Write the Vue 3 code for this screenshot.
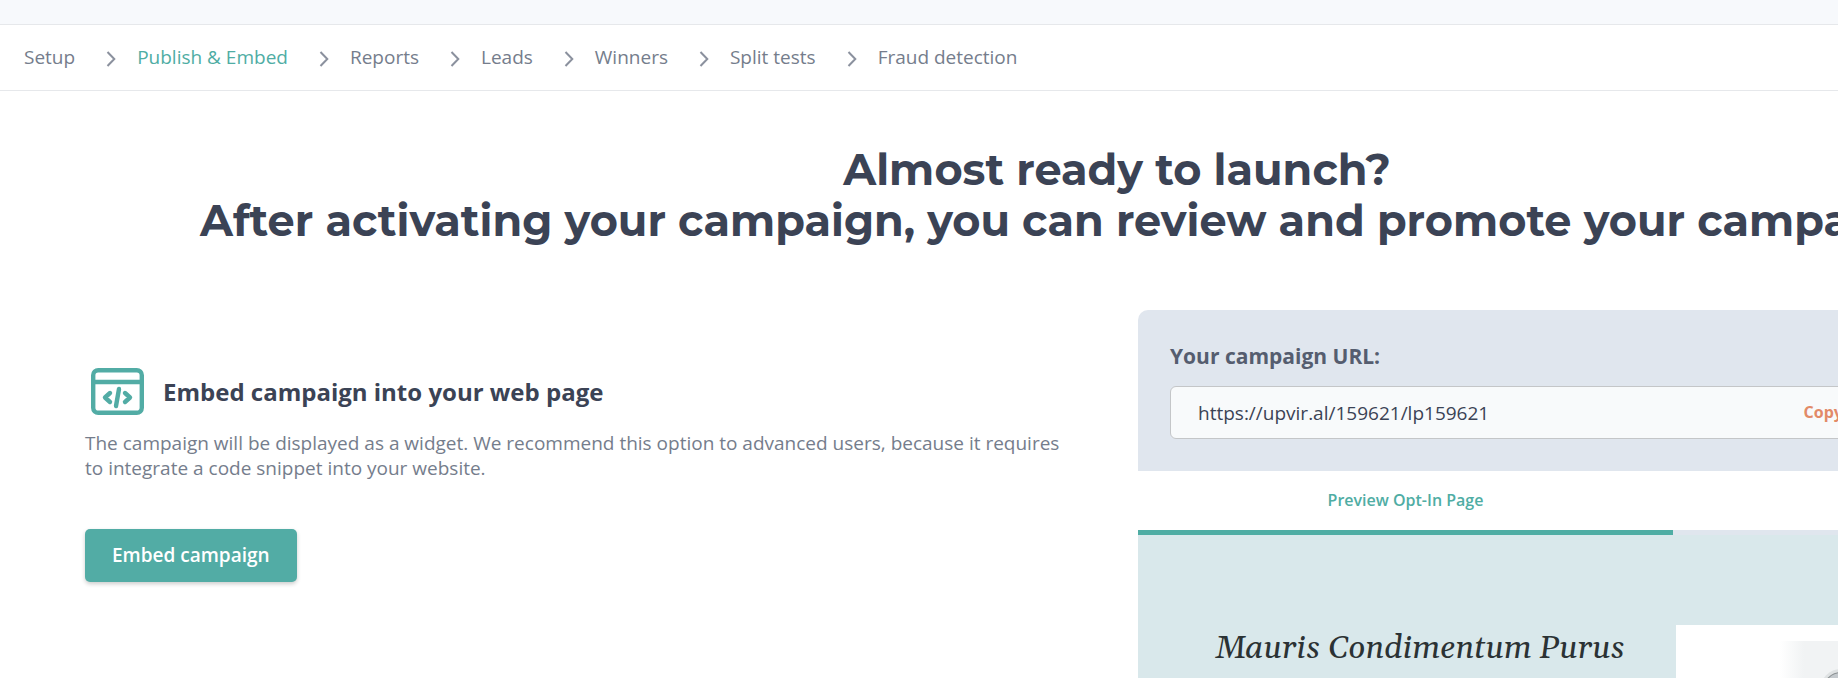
<script setup>
import { ref } from "vue";

const steps = ["Setup", "Publish & Embed", "Reports", "Leads", "Winners", "Split tests", "Fraud detection"];
const activeStep = ref("Publish & Embed");

const campaignUrl = ref("https://upvir.al/159621/lp159621");

function copyUrl() {
  navigator.clipboard.writeText(campaignUrl.value);
}
</script>

<template>
  <div class="page">
    <div class="top-strip"></div>
    <nav class="steps">
      <template v-for="(step, index) in steps" :key="step">
        <svg v-if="index > 0" class="chevron" width="10" height="16" viewBox="0 0 10 16">
          <path d="M1.5 1 L8.3 8 L1.5 15" />
        </svg>
        <a href="#" :class="['step', { active: step === activeStep }]" @click.prevent="activeStep = step">{{ step }}</a>
      </template>
    </nav>

    <main class="content">
      <h1 class="title">
        <span class="line">Almost ready to launch?</span>
        <span class="line long">After activating your campaign, you can review and promote your campaign</span>
      </h1>

      <div class="columns">
        <section class="embed">
          <div class="embed-head">
            <svg class="code-icon" width="53" height="47" viewBox="0 0 53 47">
              <rect x="2.2" y="2.2" width="48.6" height="42.6" rx="5" />
              <path d="M2 14 H51" />
              <path class="code" d="M19 25 L14 29.5 L19 34 M28 21 L25 38 M34 25 L39 29.5 L34 34" />
            </svg>
            <h2>Embed campaign into your web page</h2>
          </div>
          <p>The campaign will be displayed as a widget. We recommend this option to advanced users, because it requires to integrate a code snippet into your website.</p>
          <button class="embed-btn">Embed campaign</button>
        </section>

        <section class="card">
          <div class="url-box">
            <label for="campaign-url">Your campaign URL:</label>
            <div class="url-field">
              <input id="campaign-url" v-model="campaignUrl" type="text" readonly />
              <button class="copy" @click="copyUrl">Copy</button>
            </div>
          </div>
          <div class="tabs">
            <button class="tab">Preview Opt-In Page</button>
            <div class="tab-rest"></div>
          </div>
          <div class="preview">
            <h3>Mauris Condimentum Purus</h3>
            <div class="picture">
              <div class="photo">
                <svg width="200" height="60" viewBox="0 0 200 60">
                  <circle cx="61" cy="49" r="21" fill="#dfe2e3" />
                  <circle cx="61" cy="49" r="18" fill="#8b9092" />
                  <circle cx="61" cy="49" r="17" fill="#c4c9cd" />
                  <circle cx="64" cy="51" r="15" fill="#5d5a3c" />
                </svg>
              </div>
            </div>
          </div>
        </section>
      </div>
    </main>
  </div>
</template>

<style>
body {
  margin: 0;
  background: #ffffff;
}
</style>

<style scoped>
.page {
  height: 100vh;
  overflow: hidden;
  font-family: "Open Sans", sans-serif;
  color: #3b4355;
}
.top-strip {
  height: 24px;
  background: #f7f9fc;
  border-bottom: 1px solid #e6e8eb;
}
.steps {
  display: flex;
  align-items: center;
  height: 63px;
  padding: 0 24px 2px;
  border-bottom: 1px solid #e6e8eb;
}
.step {
  font-size: 19px;
  line-height: 24px;
  color: #757d8c;
  text-decoration: none;
  white-space: nowrap;
}
.step.active {
  color: #4fada4;
}
.chevron {
  margin: 4px 21px 0 31px;
  fill: none;
  stroke: #8b919e;
  stroke-width: 2;
}
/* the content is wider than the window and is cut at its right edge */
.content {
  width: calc(100% + 396px);
}
.title {
  margin: 0;
  padding-top: 53px;
  font-family: Montserrat, Inter, sans-serif;
  font-size: 43px;
  font-weight: 700;
  line-height: 51px;
  text-align: center;
}
.line {
  display: block;
  white-space: nowrap;
}
.line.long {
  padding-left: 200px;
  text-align: left;
}
.columns {
  display: grid;
  grid-template-columns: 1fr 1fr;
  gap: 42px;
  padding: 64px 26px 0;
}
.embed {
  padding: 58px 30px 0 59px;
}
.embed-head {
  display: flex;
  align-items: center;
  gap: 19px;
  padding-left: 6px;
}
.code-icon {
  fill: none;
  stroke: #52aca5;
  stroke-width: 4.4;
}
.code {
  stroke-linecap: round;
  stroke-linejoin: round;
}
h2 {
  margin: 0;
  font-size: 24px;
  line-height: 32px;
}
.embed p {
  margin: 16px 0 48px;
  font-size: 19px;
  line-height: 25px;
  color: #757d8c;
}
.embed-btn {
  padding: 14px 27px;
  border: 0;
  border-radius: 5px;
  background: #52aca5;
  box-shadow: 0 2px 4px rgba(0, 0, 0, 0.2);
  color: #ffffff;
  font: 600 19px/25px "Open Sans", sans-serif;
}
.card {
  min-width: 0;
}
.url-box {
  padding: 32px;
  border-radius: 10px 10px 0 0;
  background: #e0e6ee;
}
label {
  display: block;
  margin-bottom: 16px;
  font-size: 21px;
  font-weight: 700;
  line-height: 28px;
  color: #555d6f;
}
.url-field {
  display: flex;
  height: 51px;
  border: 1px solid #c4c6c8;
  border-radius: 6px;
  background: #f8fafb;
}
.url-field input {
  flex: 1;
  min-width: 0;
  padding: 0 27px;
  border: 0;
  outline: 0;
  background: transparent;
  color: #3b4355;
  font: 19px "Open Sans", sans-serif;
}
.copy {
  flex: 0 0 37%;
  padding: 0 0 2px;
  border: 0;
  background: transparent;
  color: #e28a68;
  font: 700 16px "Open Sans", sans-serif;
  text-align: left;
}
.tabs {
  display: grid;
  grid-template-columns: 1fr 1fr;
  height: 64px;
}
.tab {
  padding-bottom: 2px;
  border: 0;
  border-bottom: 5px solid #4fada4;
  background: #ffffff;
  color: #4fada4;
  font: 600 16px "Open Sans", sans-serif;
}
.tab-rest {
  border-bottom: 5px solid #e0e6ee;
}
.preview {
  display: grid;
  grid-template-columns: 1fr 1fr;
  gap: 6px;
  padding-top: 90px;
  background: #d9e8eb;
}
h3 {
  margin: 0;
  padding: 2px 0 0 32px;
  text-align: center;
  font: italic 400 32px/44px Gelasio, "Liberation Serif", serif;
  color: #2b3234;
}
.picture {
  height: 200px;
  padding: 16px 0 0 104px;
  background: #ffffff;
}
.photo {
  height: 100px;
  background: linear-gradient(to right, #ffffff, #f1f3f4 24px);
}
</style>
